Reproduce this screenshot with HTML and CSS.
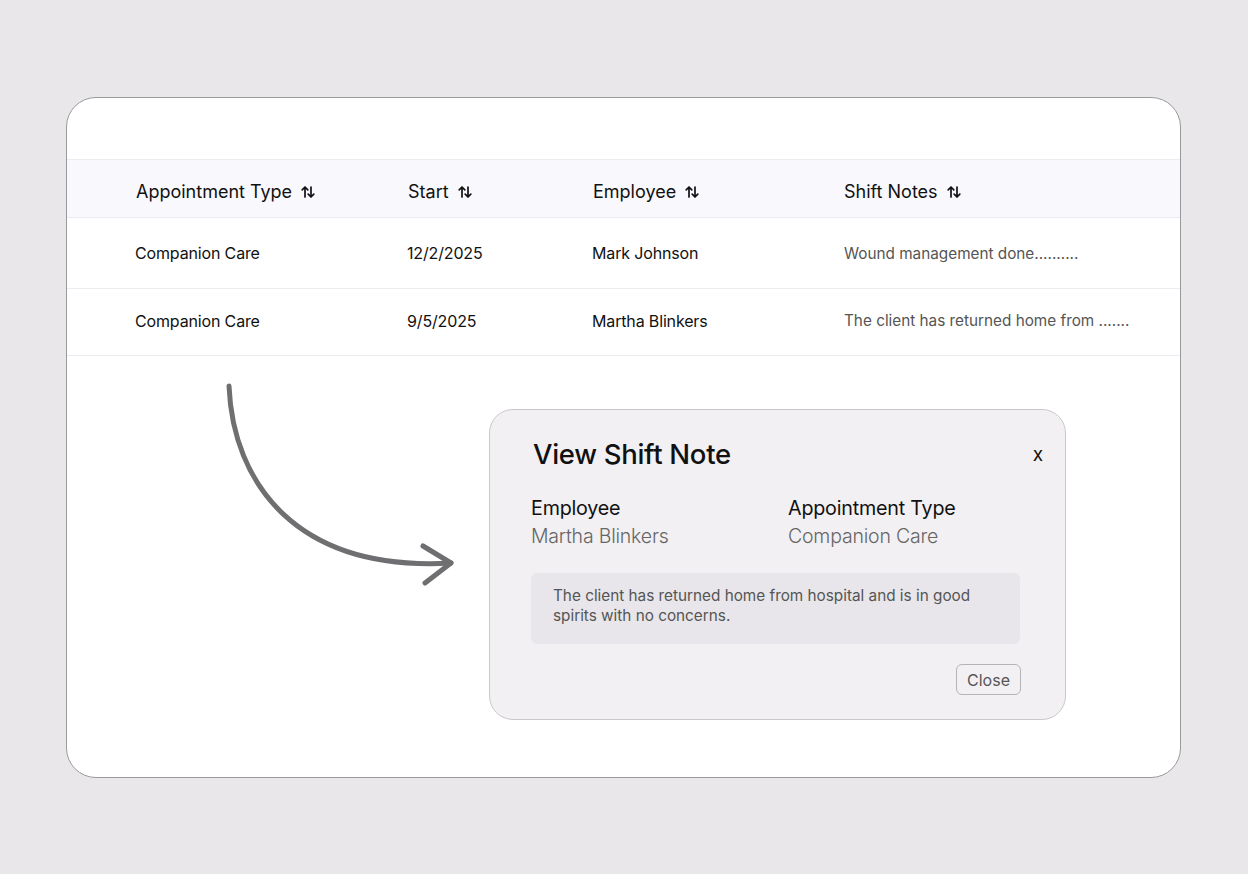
FILE: index.html
```html
<!DOCTYPE html>
<html lang="en">
<head>
<meta charset="utf-8">
<title>Shift Notes</title>
<link rel="stylesheet" href="styles.css">
</head>
<body>
<div class="card">
  <div class="card-top"></div>
  <div class="table">
    <div class="row head">
      <div class="cell">Appointment Type <svg class="sort" viewBox="0 0 14 14"><path d="M4 12V2M1.2 4.8L4 2l2.8 2.8M10 2v10M7.2 9.2L10 12l2.8-2.8"/></svg></div>
      <div class="cell">Start <svg class="sort" viewBox="0 0 14 14"><path d="M4 12V2M1.2 4.8L4 2l2.8 2.8M10 2v10M7.2 9.2L10 12l2.8-2.8"/></svg></div>
      <div class="cell">Employee <svg class="sort" viewBox="0 0 14 14"><path d="M4 12V2M1.2 4.8L4 2l2.8 2.8M10 2v10M7.2 9.2L10 12l2.8-2.8"/></svg></div>
      <div class="cell">Shift Notes <svg class="sort" viewBox="0 0 14 14"><path d="M4 12V2M1.2 4.8L4 2l2.8 2.8M10 2v10M7.2 9.2L10 12l2.8-2.8"/></svg></div>
    </div>
    <div class="row body r1">
      <div class="cell">Companion Care</div>
      <div class="cell">12/2/2025</div>
      <div class="cell">Mark Johnson</div>
      <div class="cell note">Wound management done..........</div>
    </div>
    <div class="row body r2">
      <div class="cell">Companion Care</div>
      <div class="cell">9/5/2025</div>
      <div class="cell">Martha Blinkers</div>
      <div class="cell note">The client has returned home from .......</div>
    </div>
  </div>
  <div class="stage">
    <svg class="arrow" viewBox="0 0 240 210" width="240" height="210">
      <path d="M4 4 C 8 100, 70 190, 226 181"/>
      <path d="M198 164 L226 181 L200 201"/>
    </svg>
    <div class="modal">
      <div class="modal-head">
        <h2 class="modal-title">View Shift Note</h2>
        <span class="modal-x">x</span>
      </div>
      <div class="fields">
        <div class="field">
          <div class="label">Employee</div>
          <div class="value">Martha Blinkers</div>
        </div>
        <div class="field">
          <div class="label">Appointment Type</div>
          <div class="value">Companion Care</div>
        </div>
      </div>
      <div class="note-box">The client has returned home from hospital and is in good spirits with no concerns.</div>
      <div class="actions"><button class="btn-close">Close</button></div>
    </div>
  </div>
</div>
</body>
</html>
```

FILE: styles.css
```css
* { box-sizing: border-box; }
html, body { margin: 0; padding: 0; }
body {
  background: #e9e7ea;
  font-family: Inter, "Noto Sans", "Liberation Sans", sans-serif;
  color: #111;
  width: 1248px;
  height: 874px;
  overflow: hidden;
}
.card {
  margin: 97px 0 0 66px;
  width: 1115px;
  height: 681px;
  background: #fff;
  border: 1px solid #9a999c;
  border-radius: 30px;
}
.card-top { height: 61px; }
.row {
  display: grid;
  grid-template-columns: 272px 185px 251px 1fr;
  padding-left: 68px;
  align-items: center;
}
.head {
  height: 59px;
  background: #f9f8fd;
  border-top: 1px solid #ececf0;
  border-bottom: 1px solid #ececf0;
  font-size: 18px;
  font-weight: 400;
  color: #111;
  padding-top: 5px;
}
.head .cell { display: flex; align-items: center; gap: 9px; padding-left: 1px; }
.sort {
  width: 14px; height: 14px;
  fill: none; stroke: #111; stroke-width: 1.7; stroke-linecap: round; stroke-linejoin: round;
  margin-top: 2px;
}
.body {
  font-size: 16px;
  font-weight: 400;
  color: #111;
  border-bottom: 1px solid #ececf0;
  letter-spacing: -0.15px;
}
.r1 { height: 71px; }
.r2 { height: 67px; padding-bottom: 3px; }
.body .note { font-weight: 400; color: #555; font-size: 15.3px; letter-spacing: 0; padding-left: 1px; }
.stage {
  display: flex;
  align-items: flex-start;
  padding-left: 158px;
}
.arrow {
  display: block;
  margin-top: 26px;
  fill: none;
  stroke: #6f6e71;
  stroke-width: 5;
  stroke-linecap: round;
  stroke-linejoin: round;
}
.modal {
  margin-top: 53px;
  margin-left: 24px;
  width: 577px;
  height: 311px;
  background: #f2f0f3;
  border: 1px solid #c9c8cb;
  border-radius: 24px;
  padding: 26px 22px 0 41px;
}
.modal-head {
  display: flex;
  justify-content: space-between;
  align-items: center;
  padding-left: 2px;
}
.modal-title {
  margin: 0;
  font-size: 27.5px;
  font-weight: 500;
  letter-spacing: -0.3px;
  color: #111;
  line-height: 36px;
}
.modal-x { font-size: 19px; color: #111; margin-top: 0; }
.fields {
  display: grid;
  grid-template-columns: 257px 1fr;
  margin-top: 22px;
}
.label { font-size: 19.7px; font-weight: 400; color: #111; line-height: 28px; letter-spacing: -0.2px; }
.value { font-size: 19.5px; font-weight: 300; color: #666; line-height: 28px; letter-spacing: -0.2px; }
.note-box {
  margin-top: 23px;
  width: 489px;
  height: 71px;
  background: #e8e6ea;
  border-radius: 6px;
  padding: 13px 22px 0 22px;
  font-size: 15.3px;
  line-height: 20px;
  color: #555;
}
.actions {
  display: flex;
  justify-content: flex-end;
  width: 490px;
  margin-top: 20px;
}
.btn-close {
  font-family: inherit;
  font-size: 16px;
  color: #555;
  background: #f2f0f3;
  border: 1px solid #b5b4b7;
  border-radius: 6px;
  width: 65px;
  height: 31px;
  padding: 0;
}
```
